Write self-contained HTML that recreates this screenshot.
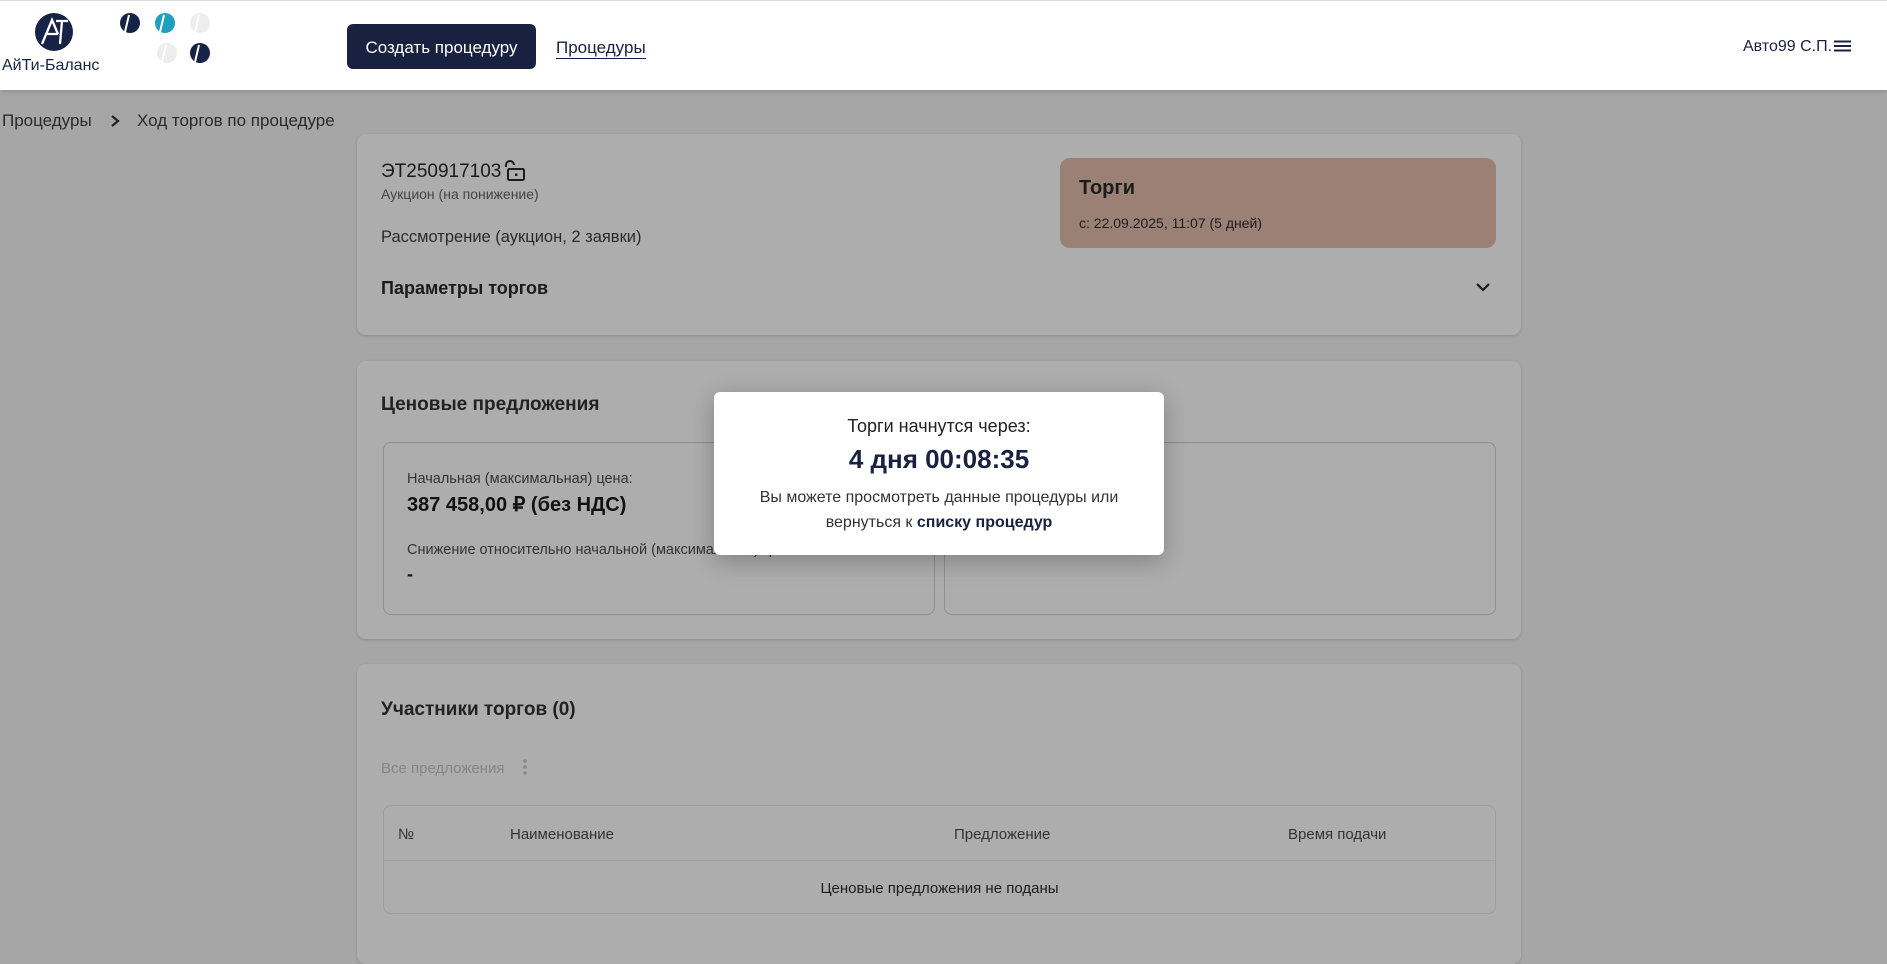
<!DOCTYPE html>
<html><head><meta charset="utf-8"><style>
*{margin:0;padding:0;box-sizing:border-box}
body{width:1887px;height:945px;overflow:hidden;background:#a6a6a6;font-family:"Liberation Sans",sans-serif;color:#1b1b1b;position:relative}
.a{position:absolute;white-space:nowrap}
.card{position:absolute;background:#adadad;border-radius:9px;box-shadow:0 1px 3px rgba(0,0,0,.15)}
.box{position:absolute;border:1px solid #8f8f8f;border-radius:8px}
</style></head><body>
<div class="a" style="left:0;top:0;width:1887px;height:90px;background:#fff;border-top:1px solid #ddd;box-shadow:0 2px 4px rgba(0,0,0,.12)"></div>
<svg class="a" style="left:0;top:0" width="230" height="85">
<circle cx="54" cy="32" r="19" fill="#172346"/>
<path d="M42 44 L52 20 L58 34 M46 34 L58 34 M56 21 L68 21 M62 21 L60 44" stroke="#fff" stroke-width="2.3" fill="none"/>
<g>
<circle cx="130" cy="23" r="10" fill="#172346"/><circle cx="165" cy="23" r="10" fill="#1e9fbf"/><circle cx="200" cy="23" r="10" fill="#ededed"/>
<circle cx="167" cy="53" r="10" fill="#ededed"/><circle cx="200" cy="53" r="10" fill="#172346"/>
<path d="M129 15 L125 32 M164 15 L160 32 M199 15 L195 32 M166 45 L162 62 M199 45 L195 62" stroke="#fff" stroke-width="2"/>
</g>
</svg>
<div class="a" style="left:2px;top:57px;font-size:16px;color:#172346">АйТи-Баланс</div>
<div class="a" style="left:347px;top:24px;width:189px;height:45px;background:#18213f;border-radius:6px;color:#fff;font-size:17px;line-height:47px;text-align:center">Создать процедуру</div>
<div class="a" style="left:556px;top:37px;font-size:17px;color:#18213f;border-bottom:1.5px solid #18213f;line-height:21px">Процедуры</div>
<div class="a" style="left:1743px;top:38px;font-size:16px;color:#18213f">Авто99 С.П.</div>
<svg class="a" style="left:1834px;top:40px" width="17" height="12"><path d="M0 1.5H17M0 6H17M0 10.5H17" stroke="#18213f" stroke-width="2"/></svg>

<div class="a" style="left:2px;top:111px;font-size:17px;color:#2a2a2a">Процедуры</div>
<svg class="a" style="left:109px;top:114px" width="12" height="14"><path d="M3 2L9 7L3 12" stroke="#222" stroke-width="2.2" fill="none"/></svg>
<div class="a" style="left:137px;top:111px;font-size:17px;color:#2a2a2a">Ход торгов по процедуре</div>

<div class="card" style="left:357px;top:134px;width:1164px;height:201px"></div>
<div class="a" style="left:381px;top:161px;font-size:19px">ЭТ250917103</div>
<svg class="a" style="left:502px;top:160px" width="24" height="22"><path d="M4 7V5A4 4 0 0 1 12 5" stroke="#1b1b1b" stroke-width="2" fill="none"/><rect x="6" y="9" width="16" height="11" rx="1.5" stroke="#1b1b1b" stroke-width="2" fill="none"/><rect x="13" y="13.5" width="2.5" height="2.5" fill="#1b1b1b"/></svg>
<div class="a" style="left:381px;top:186px;font-size:14px;color:#444">Аукцион (на понижение)</div>
<div class="a" style="left:381px;top:228px;font-size:16.5px;color:#2a2a2a">Рассмотрение (аукцион, 2 заявки)</div>
<div class="a" style="left:381px;top:278px;font-size:18px;font-weight:bold;color:#1b1b1b">Параметры торгов</div>
<svg class="a" style="left:1475px;top:282px" width="16" height="10"><path d="M2 2L8 8L14 2" stroke="#1b1b1b" stroke-width="2.2" fill="none"/></svg>
<div class="a" style="left:1060px;top:158px;width:436px;height:90px;background:#9a8075;border-radius:10px"></div>
<div class="a" style="left:1079px;top:177px;font-size:20px;font-weight:bold;color:#1b1b1b">Торги</div>
<div class="a" style="left:1079px;top:215px;font-size:14px;color:#1b1b1b">с: 22.09.2025, 11:07 (5 дней)</div>

<div class="card" style="left:357px;top:361px;width:1164px;height:278px"></div>
<div class="a" style="left:381px;top:394px;font-size:19px;font-weight:bold;color:#222">Ценовые предложения</div>
<div class="box" style="left:383px;top:442px;width:552px;height:173px"></div>
<div class="box" style="left:944px;top:442px;width:552px;height:173px"></div>
<div class="a" style="left:407px;top:471px;font-size:14.5px;color:#333">Начальная (максимальная) цена:</div>
<div class="a" style="left:407px;top:492px;font-size:20px;font-weight:bold;color:#111">387 458,00 ₽ (без НДС)</div>
<div class="a" style="left:407px;top:542px;font-size:14.5px;color:#333">Снижение относительно начальной (максимальной) цены:</div>
<div class="a" style="left:407px;top:564px;font-size:18px;font-weight:bold;color:#111">-</div>

<div class="card" style="left:357px;top:664px;width:1164px;height:300px"></div>
<div class="a" style="left:381px;top:699px;font-size:19px;font-weight:bold;color:#222">Участники торгов (0)</div>
<div class="a" style="left:381px;top:760px;font-size:15px;color:#858585">Все предложения</div>
<svg class="a" style="left:522px;top:758px" width="6" height="18"><circle cx="3" cy="3" r="1.8" fill="#888"/><circle cx="3" cy="9" r="1.8" fill="#888"/><circle cx="3" cy="15" r="1.8" fill="#888"/></svg>
<div class="box" style="left:383px;top:805px;width:1113px;height:109px;border-color:#9d9d9d"></div>
<div class="a" style="left:384px;top:860px;width:1111px;height:1px;background:#a2a2a2"></div>
<div class="a" style="left:398px;top:826px;font-size:15px;color:#333">№</div>
<div class="a" style="left:510px;top:826px;font-size:15px;color:#333">Наименование</div>
<div class="a" style="left:954px;top:826px;font-size:15px;color:#333">Предложение</div>
<div class="a" style="left:1288px;top:826px;font-size:15px;color:#333">Время подачи</div>
<div class="a" style="left:384px;top:880px;width:1111px;text-align:center;font-size:15px;color:#1b1b1b">Ценовые предложения не поданы</div>

<div class="a" style="left:714px;top:392px;width:450px;height:163px;background:#fff;border-radius:6px;box-shadow:0 6px 24px rgba(0,0,0,.25);text-align:center">
<div style="margin-top:24px;font-size:18px;color:#222">Торги начнутся через:</div>
<div style="margin-top:7px;font-size:26px;font-weight:bold;color:#18213f">4 дня 00:08:35</div>
<div style="margin-top:10px;font-size:16px;line-height:25px;color:#333">Вы можете просмотреть данные процедуры или<br>вернуться к <b style="color:#18213f">списку процедур</b></div>
</div>
</body></html>
